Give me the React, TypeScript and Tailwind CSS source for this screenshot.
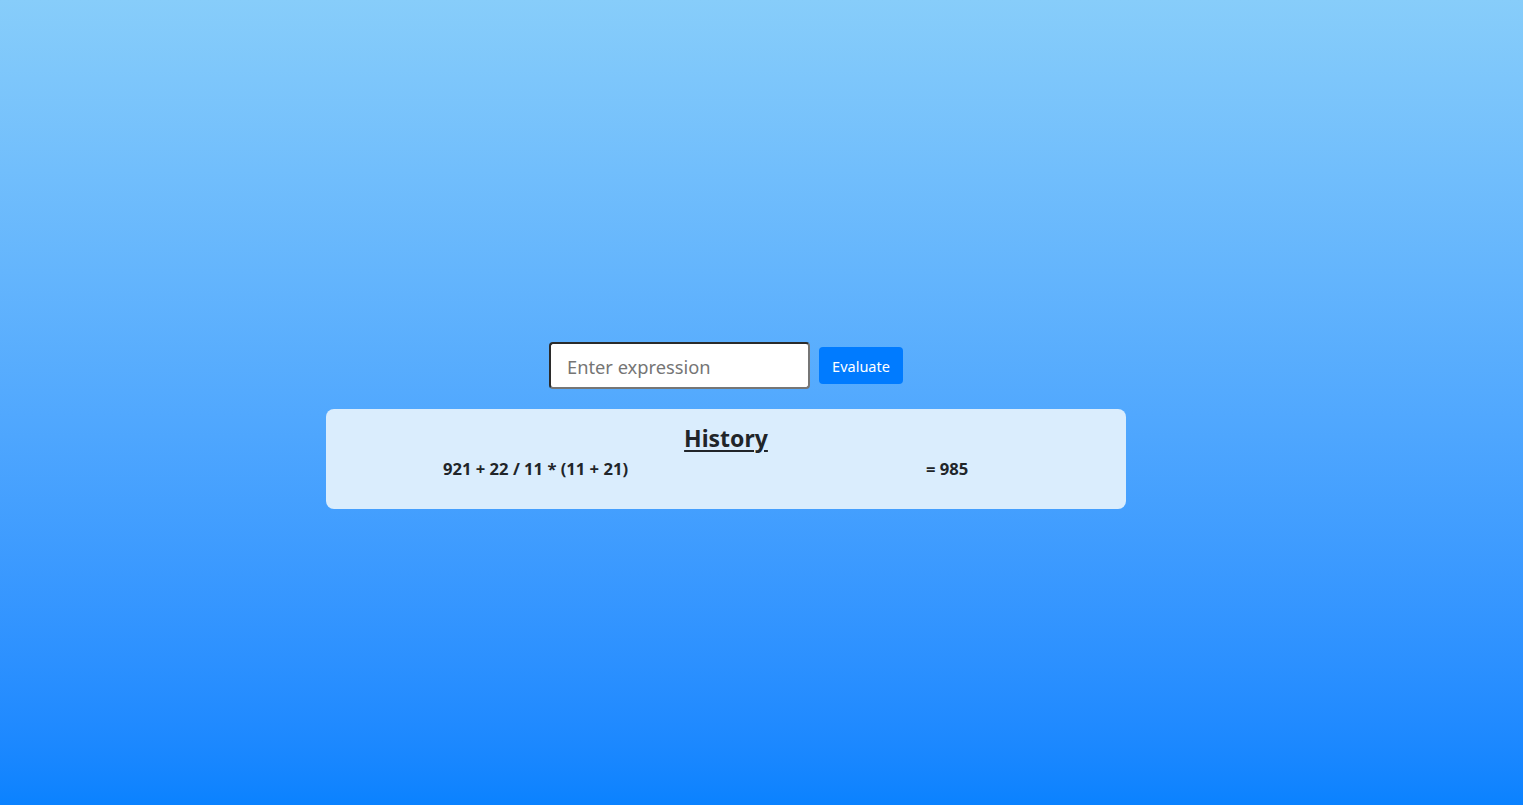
import { useState } from "react";

const font = { fontFamily: '"Noto Sans", "Open Sans", sans-serif' };

function App() {
  const [expr, setExpr] = useState("");
  const history = [{ expression: "921 + 22 / 11 * (11 + 21)", result: "985" }];

  return (
    <div
      className="min-h-screen w-full bg-gradient-to-b from-[#87cdfa] to-[#0a82ff] pt-[342px] pr-[71px]"
      style={font}
    >
      <div className="flex flex-col items-center">
        {/* 入力欄 */}
        <div className="flex items-center gap-[9px]">
          <input
            type="text"
            value={expr}
            placeholder="Enter expression"
            onChange={(e) => setExpr(e.target.value)}
            className="h-[47px] w-[261px] rounded-[4px] border-2 border-t-[#2b2b2b] border-l-[#2b2b2b] border-b-[#767676] border-r-[#767676] bg-white px-4 pt-[1px] text-[18.3px] text-gray-900 placeholder:text-[#757575] outline-none"
          />
          <button className="h-[37px] w-[84px] rounded-[4px] bg-[#007bff] pt-[2px] text-[14.5px] text-white">
            Evaluate
          </button>
        </div>

        {/* 履歴 */}
        <div className="mt-[20px] h-[100px] w-[800px] rounded-[8px] bg-[#daedfd] pt-[12px] text-[#212529]">
          <h2 className="text-center text-[23px] font-bold leading-[34px] underline underline-offset-[3px] decoration-2">
            History
          </h2>
          {history.map((h, i) => (
            <div key={i} className="flex pl-[117px] pt-[2px] text-[16.6px] font-bold leading-[24px]">
              <span className="w-[483px]">{h.expression}</span>
              <span>= {h.result}</span>
            </div>
          ))}
        </div>
      </div>
    </div>
  );
}

export default App;
